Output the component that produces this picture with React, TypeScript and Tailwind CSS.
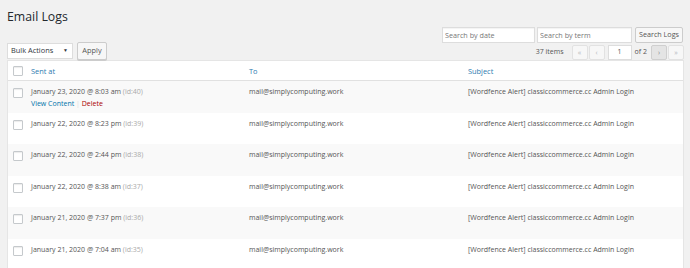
const logs = [
  { sent: 'January 23, 2020 @ 8:03 am', id: 40, actions: true },
  { sent: 'January 22, 2020 @ 8:23 pm', id: 39 },
  { sent: 'January 22, 2020 @ 2:44 pm', id: 38 },
  { sent: 'January 22, 2020 @ 8:38 am', id: 37 },
  { sent: 'January 21, 2020 @ 7:37 pm', id: 36 },
  { sent: 'January 21, 2020 @ 7:04 am', id: 35 },
];

function Checkbox() {
  return (
    <span className="block w-[10px] h-[10px] bg-white border border-[#c5c9cc] rounded-[1px] shadow-[inset_0_1px_1px_rgba(0,0,0,0.08)]" />
  );
}

function PageBtn({ label, active }: { label: string; active?: boolean }) {
  return (
    <span
      className={`flex items-center justify-center w-[16px] h-[15px] border rounded-[2px] text-[7px] leading-none ${
        active
          ? 'bg-[#e4e4e4] border-[#cfcfcf] text-[#888]'
          : 'bg-[#f7f7f7] border-[#e2e2e2] text-[#b4b9be]'
      }`}
    >
      {label}
    </span>
  );
}

export default function App() {
  return (
    <div className="w-[690px] h-[268px] overflow-hidden bg-[#f1f1f1] pl-[7px] pr-[6px] font-['Open_Sans',sans-serif] text-[#555]">
      <h1 className="pt-[7px] h-[27px] text-[12.3px] leading-[20px] text-[#23282d]">Email Logs</h1>

      {/* Search */}
      <div className="flex justify-end h-[16px] gap-[2px] pr-[1px]">
        <input
          placeholder="Search by date"
          className="w-[93px] h-[16px] bg-white border border-[#ddd] px-[2px] text-[7.2px] placeholder:text-[#777] shadow-[inset_0_1px_1px_rgba(0,0,0,0.05)] outline-none"
        />
        <input
          placeholder="Search by term"
          className="w-[95px] h-[16px] bg-white border border-[#ddd] px-[2px] text-[7.2px] placeholder:text-[#777] shadow-[inset_0_1px_1px_rgba(0,0,0,0.05)] outline-none"
        />
        <button className="ml-[1px] w-[48px] h-[16px] bg-[#f7f7f7] border border-[#ccc] rounded-[2px] text-[7.2px] text-[#555] leading-none">
          Search Logs
        </button>
      </div>

      {/* Tablenav */}
      <div className="flex justify-between h-[17px]">
        <div className="flex gap-[4px]">
          <div className="flex items-center justify-between w-[66px] h-[16px] bg-white border border-[#ddd] pl-[3px] pr-[4px] text-[7.4px] text-[#32373c]">
            <span>Bulk Actions</span>
            <span className="text-[5px]">▼</span>
          </div>
          <button className="-mt-[1px] w-[30px] h-[18px] bg-[#f7f7f7] border border-[#ccc] rounded-[2px] text-[7.4px] text-[#555] leading-none shadow-[0_1px_0_#ccc]">
            Apply
          </button>
        </div>
        <div className="flex items-center gap-[1px] h-[16px] text-[7px] mt-[1px]">
          <span className="mr-[7px]">37 items</span>
          <PageBtn label="«" />
          <PageBtn label="‹" />
          <span className="ml-[2px] flex items-center justify-center w-[24px] h-[15px] bg-white border border-[#ddd]">1</span>
          <span className="ml-[2px] mr-[3px]">of 2</span>
          <PageBtn label="›" active />
          <PageBtn label="»" />
        </div>
      </div>

      {/* Table */}
      <div className="bg-white border border-[#e5e5e5] border-b-0 text-[7px]">
        <div className="grid grid-cols-[23px_218px_219px_1fr] items-center h-[20px] border-b border-[#e1e1e1] text-[#2e7bb0]">
          <div className="pl-[5px]">
            <Checkbox />
          </div>
          <span className="leading-[12px] text-[7.4px]">Sent at</span>
          <span className="leading-[12px] text-[7.4px]">To</span>
          <span className="leading-[12px] text-[7.4px]">Subject</span>
        </div>
        {logs.map((log, i) => (
          <div
            key={log.id}
            className={`grid grid-cols-[23px_218px_219px_1fr] h-[31.5px] leading-[12px] ${
              i % 2 === 0 ? 'bg-[#f9f9f9]' : 'bg-white'
            }`}
          >
            <div className="pl-[5px] pt-[7px]">
              <Checkbox />
            </div>
            <div className="pt-[5px]">
              <div>
                {log.sent} <span className="text-[#aaa]">(id:{log.id})</span>
              </div>
              {log.actions && (
                <div>
                  <span className="text-[#0073aa]">View Content</span>
                  <span className="text-[#ddd]"> | </span>
                  <span className="text-[#a00]">Delete</span>
                </div>
              )}
            </div>
            <div className="pt-[5px]">mail@simplycomputing.work</div>
            <div className="pt-[5px]">[Wordfence Alert] classiccommerce.cc Admin Login</div>
          </div>
        ))}
      </div>
    </div>
  );
}
